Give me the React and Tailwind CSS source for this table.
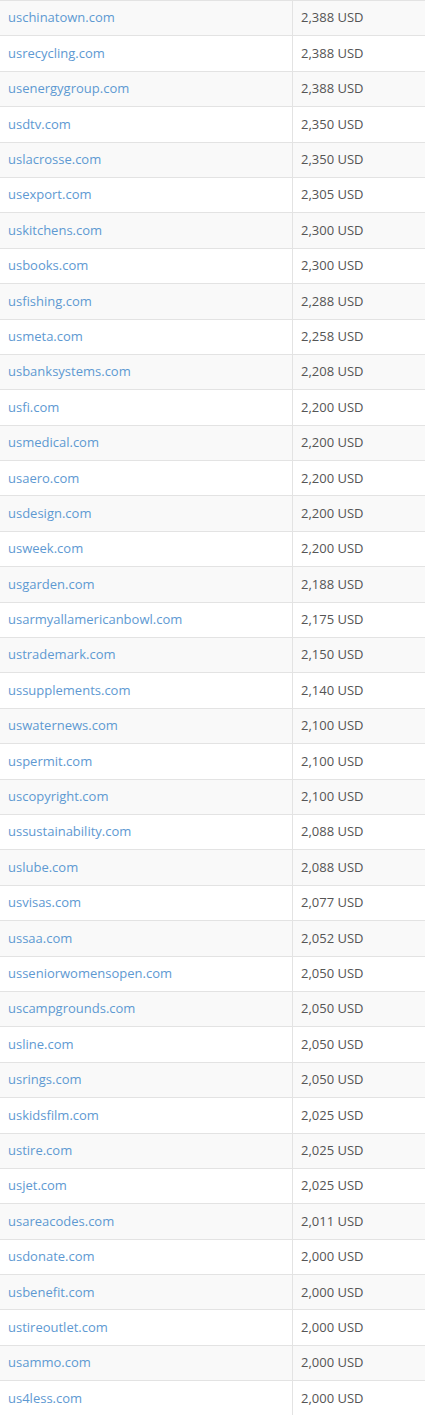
const rows = [
  ["uschinatown.com", "2,388"],
  ["usrecycling.com", "2,388"],
  ["usenergygroup.com", "2,388"],
  ["usdtv.com", "2,350"],
  ["uslacrosse.com", "2,350"],
  ["usexport.com", "2,305"],
  ["uskitchens.com", "2,300"],
  ["usbooks.com", "2,300"],
  ["usfishing.com", "2,288"],
  ["usmeta.com", "2,258"],
  ["usbanksystems.com", "2,208"],
  ["usfi.com", "2,200"],
  ["usmedical.com", "2,200"],
  ["usaero.com", "2,200"],
  ["usdesign.com", "2,200"],
  ["usweek.com", "2,200"],
  ["usgarden.com", "2,188"],
  ["usarmyallamericanbowl.com", "2,175"],
  ["ustrademark.com", "2,150"],
  ["ussupplements.com", "2,140"],
  ["uswaternews.com", "2,100"],
  ["uspermit.com", "2,100"],
  ["uscopyright.com", "2,100"],
  ["ussustainability.com", "2,088"],
  ["uslube.com", "2,088"],
  ["usvisas.com", "2,077"],
  ["ussaa.com", "2,052"],
  ["usseniorwomensopen.com", "2,050"],
  ["uscampgrounds.com", "2,050"],
  ["usline.com", "2,050"],
  ["usrings.com", "2,050"],
  ["uskidsfilm.com", "2,025"],
  ["ustire.com", "2,025"],
  ["usjet.com", "2,025"],
  ["usareacodes.com", "2,011"],
  ["usdonate.com", "2,000"],
  ["usbenefit.com", "2,000"],
  ["ustireoutlet.com", "2,000"],
  ["usammo.com", "2,000"],
  ["us4less.com", "2,000"],
];

export default function App() {
  return (
    <div className="w-[425px] bg-white font-['Open_Sans',sans-serif] text-[13px]">
      {/* tabla de dominios */}
      <div className="border-t border-[#e3e3e3]">
        {rows.map(([domain, price], i) => (
          <div
            key={domain}
            className={`grid h-[35.4px] grid-cols-[293px_1fr] border-b border-[#e3e3e3] ${i % 2 === 0 ? "bg-[#f9f9f9]" : "bg-white"}`}
          >
            <div className="flex items-center border-r border-[#e3e3e3] pl-2 text-[#5e99d2]">
              {domain}
            </div>
            <div className="flex items-center pl-2 text-[#555]">{price} USD</div>
          </div>
        ))}
      </div>
    </div>
  );
}
